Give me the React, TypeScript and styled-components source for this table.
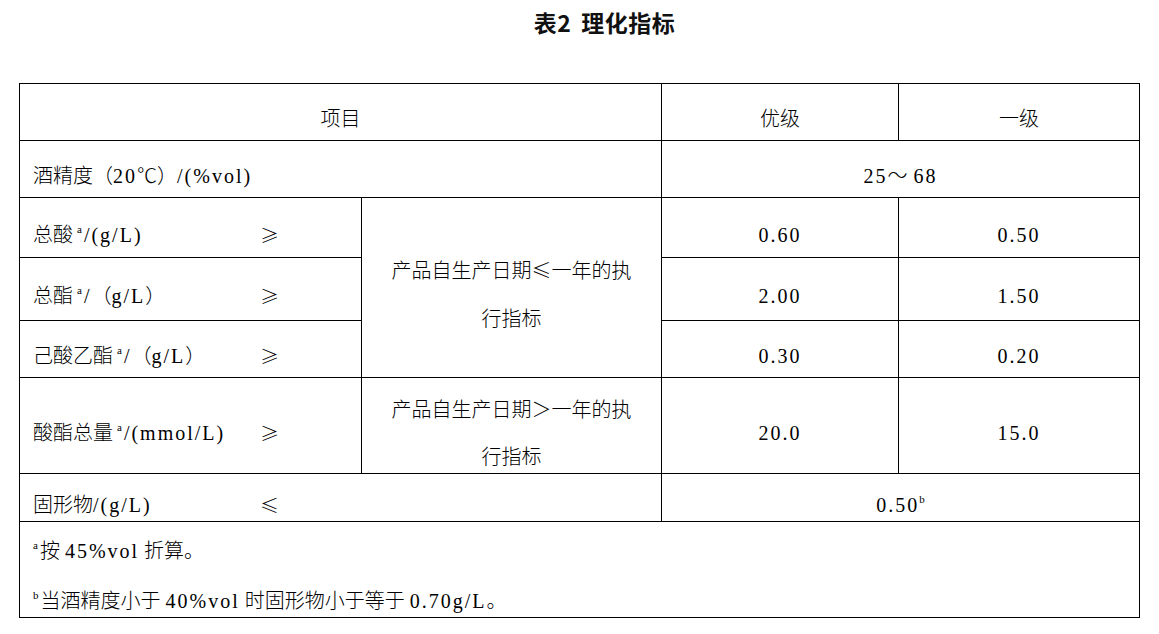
import React from "react";
import styled, { createGlobalStyle } from "styled-components";

const GlobalStyle = createGlobalStyle`
  html, body {
    margin: 0;
    padding: 0;
    background: #ffffff;
  }
  body {
    font-family: "Liberation Serif", "Noto Sans CJK SC", serif;
    font-weight: 300;
    color: #000000;
  }
`;

const Page = styled.div`
  width: 1159px;
  min-height: 634px;
  background: #ffffff;
`;

const Title = styled.h1`
  margin: 0 0 39px 0;
  height: 44px;
  display: flex;
  justify-content: center;
  align-items: center;
  gap: 10px;
  padding-left: 50px;
  font-family: "Noto Sans CJK SC", "Liberation Sans", sans-serif;
  font-size: 23px;
  font-weight: 700;
  letter-spacing: 0.5px;
  color: #111111;
`;

const Grid = styled.div`
  display: grid;
  grid-template-columns: 342px 300px 237px 241px;
  grid-template-rows: 57px 57px 60px 63px 57px 96px 48px 96px;
  width: max-content;
  margin-left: 19px;
  border-top: 1px solid #000000;
  border-left: 1px solid #000000;
`;

type CellProps = {
  $col: string;
  $row: string;
  $left?: boolean;
  $pt?: number;
};

const Cell = styled.div<CellProps>`
  grid-column: ${(p) => p.$col};
  grid-row: ${(p) => p.$row};
  box-sizing: border-box;
  border-right: 1px solid #000000;
  border-bottom: 1px solid #000000;
  display: flex;
  align-items: center;
  justify-content: ${(p) => (p.$left ? "flex-start" : "center")};
  padding: ${(p) => p.$pt ?? 14}px 0 0 ${(p) => (p.$left ? 13 : 0)}px;
  font-size: 20px;
  line-height: 24px;
  white-space: nowrap;
`;

const Lat = styled.span<{ $ml?: number }>`
  font-family: "Liberation Serif", serif;
  letter-spacing: 2px;
  margin-left: ${(p) => p.$ml ?? 0}px;
`;

const MultiLine = styled.div<{ $lh: number }>`
  text-align: center;
  line-height: ${(p) => p.$lh}px;
  font-family: "Noto Sans CJK SC", "Liberation Serif", serif;
  font-size: 20px;
`;

const Notes = styled.div`
  display: flex;
  flex-direction: column;
  line-height: 50px;
`;

const Label = styled.span`
  display: inline-block;
  width: 227px;
`;

const Rel = styled.span`
  font-family: "Noto Sans CJK SC", sans-serif;
  font-size: 19px;
`;

const Sup = styled.sup<{ $gap?: boolean }>`
  font-size: 11px;
  line-height: 0;
  vertical-align: 9px;
  margin-left: ${(p) => (p.$gap ? 4 : 0)}px;
  margin-right: 2px;
`;

const NumSup = styled.sup`
  font-size: 11px;
  line-height: 0;
  vertical-align: 9px;
`;

export default function App() {
  return (
    <Page>
      <GlobalStyle />
      <Title>
        <span>表2</span>
        <span>理化指标</span>
      </Title>
      <Grid>
        <Cell $col="1 / span 2" $row="1">项目</Cell>
        <Cell $col="3" $row="1">优级</Cell>
        <Cell $col="4" $row="1">一级</Cell>

        <Cell $col="1 / span 2" $row="2" $left>
          酒精度（<Lat>20</Lat>℃）<Lat>/(%vol)</Lat>
        </Cell>
        <Cell $col="3 / span 2" $row="2">
          <Lat>25</Lat>～ <Lat $ml={6}>68</Lat>
        </Cell>

        <Cell $col="1" $row="3" $left>
          <Label>
            总酸<Sup $gap>a</Sup>
            <Lat>/(g/L)</Lat>
          </Label>
          <Rel>≥</Rel>
        </Cell>
        <Cell $col="2" $row="3 / span 3" $pt={13}>
          <MultiLine $lh={48}>
            产品自生产日期≤一年的执
            <br />
            行指标
          </MultiLine>
        </Cell>
        <Cell $col="3" $row="3"><Lat>0.60</Lat></Cell>
        <Cell $col="4" $row="3"><Lat>0.50</Lat></Cell>

        <Cell $col="1" $row="4" $left>
          <Label>
            总酯<Sup $gap>a</Sup>
            <Lat>/</Lat>（<Lat>g/L</Lat>）
          </Label>
          <Rel>≥</Rel>
        </Cell>
        <Cell $col="3" $row="4"><Lat>2.00</Lat></Cell>
        <Cell $col="4" $row="4"><Lat>1.50</Lat></Cell>

        <Cell $col="1" $row="5" $left>
          <Label>
            己酸乙酯<Sup $gap>a</Sup>
            <Lat>/</Lat>（<Lat>g/L</Lat>）
          </Label>
          <Rel>≥</Rel>
        </Cell>
        <Cell $col="3" $row="5"><Lat>0.30</Lat></Cell>
        <Cell $col="4" $row="5"><Lat>0.20</Lat></Cell>

        <Cell $col="1" $row="6" $left>
          <Label>
            酸酯总量<Sup $gap>a</Sup>
            <Lat>/(mmol/L)</Lat>
          </Label>
          <Rel>≥</Rel>
        </Cell>
        <Cell $col="2" $row="6" $pt={12}>
          <MultiLine $lh={47}>
            产品自生产日期＞一年的执
            <br />
            行指标
          </MultiLine>
        </Cell>
        <Cell $col="3" $row="6"><Lat>20.0</Lat></Cell>
        <Cell $col="4" $row="6"><Lat>15.0</Lat></Cell>

        <Cell $col="1 / span 2" $row="7" $left>
          <Label>
            固形物<Lat>/(g/L)</Lat>
          </Label>
          <Rel>≤</Rel>
        </Cell>
        <Cell $col="3 / span 2" $row="7">
          <span>
            <Lat>0.50</Lat>
            <NumSup>b</NumSup>
          </span>
        </Cell>

        <Cell $col="1 / span 4" $row="8" $left $pt={13}>
          <Notes>
            <span>
              <Sup>a</Sup>按 <Lat>45%vol</Lat> 折算。
            </span>
            <span>
              <Sup>b</Sup>当酒精度小于 <Lat>40%vol</Lat> 时固形物小于等于 <Lat>0.70g/L</Lat>。
            </span>
          </Notes>
        </Cell>
      </Grid>
    </Page>
  );
}
